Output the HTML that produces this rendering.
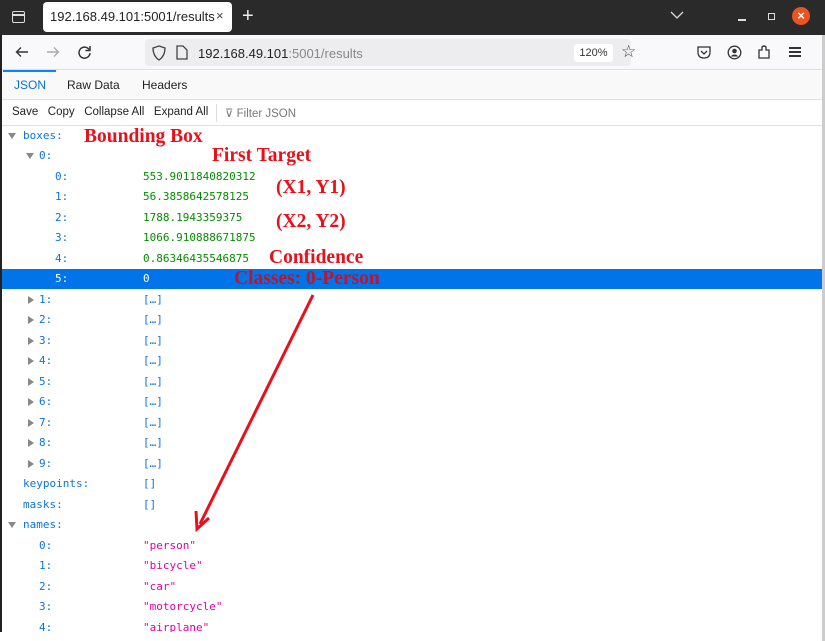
<!DOCTYPE html>
<html><head><style>
*{margin:0;padding:0;box-sizing:border-box}
body{width:825px;height:641px;overflow:hidden;background:#fff;font-family:"Liberation Sans","DejaVu Sans",sans-serif;position:relative}
.abs{position:absolute}
.mono{font-family:"DejaVu Sans Mono","Liberation Mono",monospace;font-size:11px}
.row{position:absolute;left:0;width:822px;height:20px;line-height:20px}
.k{color:#0b74d6;position:absolute}
.v{position:absolute;left:143px}
.g{color:#058b00}.p{color:#dd00a9}.b{color:#0b74d6}
.tri{position:absolute;width:0;height:0;border-left:4px solid transparent;border-right:4px solid transparent;border-top:6px solid #888;top:7px}
.trr{position:absolute;width:0;height:0;border-top:4px solid transparent;border-bottom:4px solid transparent;border-left:6px solid #888;top:6px}
.ann{position:absolute;font-family:"Liberation Serif",serif;font-weight:bold;color:#e8101a;font-size:19.5px;white-space:nowrap}
</style></head><body>
<!-- tab bar -->
<div class="abs" style="left:0;top:0;width:825px;height:35px;background:#2b2a2a"></div>
<div class="abs" style="left:12px;top:11px;width:13px;height:12px;border:1.5px solid #ddd;border-radius:2px"></div>
<div class="abs" style="left:12px;top:14px;width:13px;height:1.5px;background:#ddd"></div>
<div class="abs" style="left:43px;top:2px;width:189px;height:30px;background:#fff;border-radius:4px"></div>
<div class="abs" style="left:50px;top:9px;font-size:13px;color:#222">192.168.49.101:5001/results</div>
<div class="abs" style="left:216px;top:8px;font-size:13px;color:#444">×</div>
<div class="abs" style="left:242px;top:5px;font-size:20px;color:#eee">+</div>
<svg class="abs" style="left:670px;top:10px" width="14" height="10"><path d="M1 2 L7 8 L13 2" stroke="#ddd" stroke-width="1.3" fill="none"/></svg>
<div class="abs" style="left:738px;top:19px;width:8px;height:1.5px;background:#ddd"></div>
<div class="abs" style="left:768px;top:13px;width:7px;height:7px;border:1.3px solid #ddd"></div>
<div class="abs" style="left:792px;top:7px;width:18px;height:18px;border-radius:50%;background:#e95420;color:#fff;font-size:13px;line-height:18px;text-align:center;font-weight:bold">×</div>
<!-- nav bar -->
<div class="abs" style="left:2px;top:35px;width:821px;height:35px;background:#f9f9fb;border-bottom:1px solid #ddd"></div>
<svg class="abs" style="left:15px;top:46px" width="14" height="12"><path d="M13 6 H1.5 M6 1.5 L1.5 6 L6 10.5" stroke="#333" stroke-width="1.4" fill="none"/></svg>
<svg class="abs" style="left:46px;top:46px" width="14" height="12"><path d="M1 6 H12.5 M8 1.5 L12.5 6 L8 10.5" stroke="#aaa" stroke-width="1.4" fill="none"/></svg>
<svg class="abs" style="left:77px;top:45px" width="15" height="15"><path d="M12 4.5 A5.5 5.5 0 1 0 13 8" stroke="#333" stroke-width="1.5" fill="none"/><path d="M13 1 V5.5 H8.5" stroke="#333" stroke-width="1.5" fill="none"/></svg>
<div class="abs" style="left:145px;top:39px;width:486px;height:27px;background:#ededf0;border-radius:4px"></div>
<svg class="abs" style="left:152px;top:45px" width="14" height="16"><path d="M7 1 L13 3 Q13 11 7 15 Q1 11 1 3 Z" stroke="#444" stroke-width="1.3" fill="none"/></svg>
<svg class="abs" style="left:176px;top:45px" width="12" height="15"><path d="M1 1 H7 L11 5 V14 H1 Z" stroke="#444" stroke-width="1.3" fill="none"/></svg>
<div class="abs" style="left:198px;top:46px;font-size:13px;color:#222">192.168.49.101<span style="color:#888">:5001/results</span></div>
<div class="abs" style="left:574px;top:44px;width:39px;height:18px;background:#fff;border-radius:3px;font-size:11px;color:#333;text-align:center;line-height:18px">120%</div>
<div class="abs" style="left:621px;top:42px;font-size:17px;color:#444">☆</div>
<svg class="abs" style="left:697px;top:45px" width="14" height="14"><path d="M1 2 H13 V7 Q13 13 7 13 Q1 13 1 7 Z" stroke="#333" stroke-width="1.3" fill="none"/><path d="M4 6 L7 9 L10 6" stroke="#333" stroke-width="1.3" fill="none"/></svg>
<svg class="abs" style="left:727px;top:45px" width="15" height="15"><circle cx="7.5" cy="7.5" r="6.3" stroke="#333" stroke-width="1.3" fill="none"/><circle cx="7.5" cy="6" r="2.3" fill="#333"/><path d="M3.5 11.5 Q7.5 7.5 11.5 11.5" fill="#333"/></svg>
<svg class="abs" style="left:757px;top:44px" width="15" height="16"><path d="M2 6 H5 V3 Q7 1 9 3 V6 H12 V14 H2 Z" stroke="#333" stroke-width="1.3" fill="none"/></svg>
<div class="abs" style="left:789px;top:47px;width:12px;height:1.5px;background:#333;box-shadow:0 4px 0 #333,0 8px 0 #333"></div>
<!-- devtools tabs -->
<div class="abs" style="left:2px;top:71px;width:821px;height:29px;background:#f9f9fa;border-bottom:1px solid #e0e0e2"></div>
<div class="abs" style="left:3px;top:70px;width:53px;height:2px;background:#0a84ff"></div>
<div class="abs" style="left:14px;top:78px;font-size:12px;color:#0a6fd6">JSON</div>
<div class="abs" style="left:67px;top:78px;font-size:12px;color:#222">Raw Data</div>
<div class="abs" style="left:142px;top:78px;font-size:12px;color:#222">Headers</div>
<!-- toolbar -->
<div class="abs" style="left:2px;top:100px;width:821px;height:26px;background:#fff;border-bottom:1px solid #e0e0e2"></div>
<div class="abs" style="left:12px;top:106px;font-size:11.5px;color:#222">Save&nbsp;&nbsp; Copy&nbsp;&nbsp; Collapse All&nbsp;&nbsp; Expand All</div>
<div class="abs" style="left:216px;top:104px;width:1px;height:18px;background:#ddd"></div>
<div class="abs" style="left:225px;top:106px;font-size:11.5px;color:#777">⊽ Filter JSON</div>
<!-- borders -->
<div class="abs" style="left:0;top:35px;width:2px;height:597px;background:#222"></div>
<div class="abs" style="left:822px;top:35px;width:3px;height:606px;background:#ccc"></div>
<!-- rows -->
<div class="mono">
<div class="row" style="top:126px"><i class="tri" style="left:8px"></i><span class="k" style="left:23px">boxes:</span></div>
<div class="row" style="top:146px"><i class="tri" style="left:26px"></i><span class="k" style="left:39px">0:</span></div>
<div class="row" style="top:167px"><span class="k" style="left:55px">0:</span><span class="v g">553.9011840820312</span></div>
<div class="row" style="top:187px"><span class="k" style="left:55px">1:</span><span class="v g">56.3858642578125</span></div>
<div class="row" style="top:208px"><span class="k" style="left:55px">2:</span><span class="v g">1788.1943359375</span></div>
<div class="row" style="top:228px"><span class="k" style="left:55px">3:</span><span class="v g">1066.910888671875</span></div>
<div class="row" style="top:249px"><span class="k" style="left:55px">4:</span><span class="v g">0.86346435546875</span></div>
<div class="row" style="top:269px;background:#0074e8;left:2px;width:820px"><span class="k" style="left:53px;color:#fff">5:</span><span class="v" style="left:141px;color:#fff">0</span></div>
<div class="row" style="top:290px"><i class="trr" style="left:28px"></i><span class="k" style="left:39px">1:</span><span class="v b">[…]</span></div>
<div class="row" style="top:310px"><i class="trr" style="left:28px"></i><span class="k" style="left:39px">2:</span><span class="v b">[…]</span></div>
<div class="row" style="top:331px"><i class="trr" style="left:28px"></i><span class="k" style="left:39px">3:</span><span class="v b">[…]</span></div>
<div class="row" style="top:351px"><i class="trr" style="left:28px"></i><span class="k" style="left:39px">4:</span><span class="v b">[…]</span></div>
<div class="row" style="top:372px"><i class="trr" style="left:28px"></i><span class="k" style="left:39px">5:</span><span class="v b">[…]</span></div>
<div class="row" style="top:392px"><i class="trr" style="left:28px"></i><span class="k" style="left:39px">6:</span><span class="v b">[…]</span></div>
<div class="row" style="top:413px"><i class="trr" style="left:28px"></i><span class="k" style="left:39px">7:</span><span class="v b">[…]</span></div>
<div class="row" style="top:433px"><i class="trr" style="left:28px"></i><span class="k" style="left:39px">8:</span><span class="v b">[…]</span></div>
<div class="row" style="top:454px"><i class="trr" style="left:28px"></i><span class="k" style="left:39px">9:</span><span class="v b">[…]</span></div>
<div class="row" style="top:474px"><span class="k" style="left:23px">keypoints:</span><span class="v b">[]</span></div>
<div class="row" style="top:495px"><span class="k" style="left:23px">masks:</span><span class="v b">[]</span></div>
<div class="row" style="top:515px"><i class="tri" style="left:8px"></i><span class="k" style="left:23px">names:</span></div>
<div class="row" style="top:536px"><span class="k" style="left:39px">0:</span><span class="v p">"person"</span></div>
<div class="row" style="top:556px"><span class="k" style="left:39px">1:</span><span class="v p">"bicycle"</span></div>
<div class="row" style="top:577px"><span class="k" style="left:39px">2:</span><span class="v p">"car"</span></div>
<div class="row" style="top:597px"><span class="k" style="left:39px">3:</span><span class="v p">"motorcycle"</span></div>
<div class="row" style="top:618px;height:14px;overflow:hidden"><span class="k" style="left:39px">4:</span><span class="v p">"airplane"</span></div>
</div>
<div class="abs" style="left:2px;top:632px;width:820px;height:9px;background:#fff"></div>
<!-- annotations -->
<div class="ann" style="left:84px;top:126px">Bounding Box</div>
<div class="ann" style="left:212px;top:145px">First Target</div>
<div class="ann" style="left:276px;top:177px">(X1, Y1)</div>
<div class="ann" style="left:276px;top:211px">(X2, Y2)</div>
<div class="ann" style="left:269px;top:247px">Confidence</div>
<div class="ann" style="left:234px;top:268px;color:#c0142a">Classes: 0-Person</div>
<svg class="abs" style="left:0;top:0" width="825" height="641"><line x1="313" y1="295" x2="200" y2="524" stroke="#e8101a" stroke-width="3"/><path d="M196 511 L197 529 L209 518" stroke="#e8101a" stroke-width="3" fill="none"/></svg>
</body></html>
